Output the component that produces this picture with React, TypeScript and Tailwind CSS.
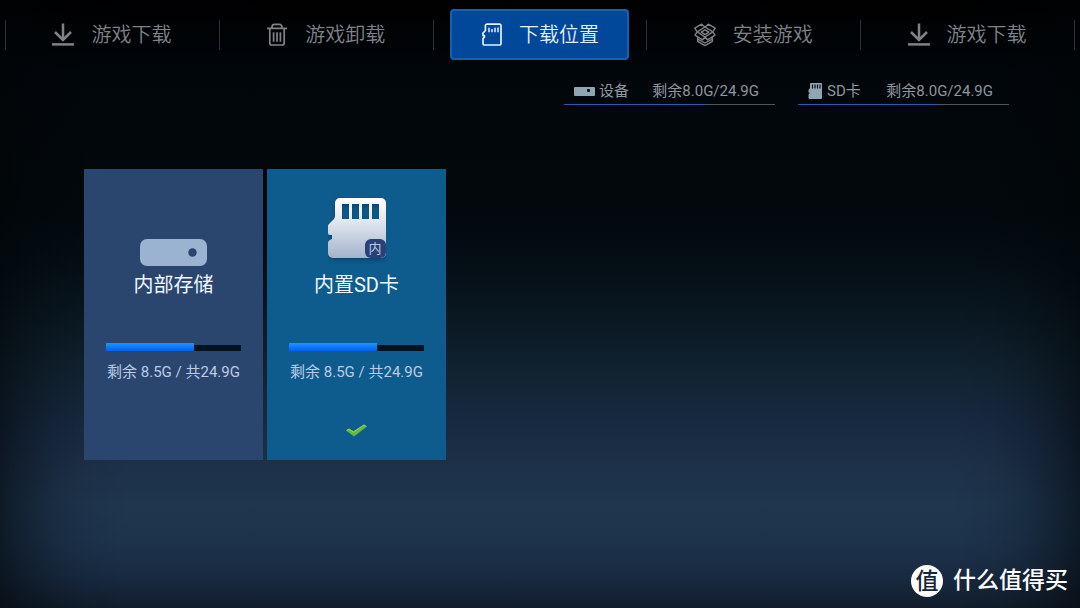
import { FC, ReactNode, useState } from 'react';

interface TabItem
{
    id: string;
    label: string;
    icon: ReactNode;
}

interface StorageItem
{
    id: string;
    name: string;
    usage: string;
    percent: number;
    icon: ReactNode;
}

const DownloadIcon: FC<{}> = () => (
    <svg className="w-6 h-6" viewBox="0 0 24 24" fill="none" stroke="currentColor" strokeWidth="2.5" aria-hidden="true">
        <path d="M12 .5v16.500M4 9l8 8 8-8" />
        <path d="M1 21.400h22" />
    </svg>
);

const TrashIcon: FC<{}> = () => (
    <svg className="w-6 h-6" viewBox="0 0 24 24" fill="none" stroke="currentColor" strokeWidth="1.7" aria-hidden="true">
        <path d="M2 5.400h20M7 5.200V4a2.600 2.600 0 0 1 2.600-2.600h4.800A2.600 2.600 0 0 1 17 4v1.200" />
        <path d="M4.800 5.600v14.400a2 2 0 0 0 2 2h10.400a2 2 0 0 0 2-2V5.600" />
        <path d="M8.600 9.200v9.600M12 9.200v9.600M15.400 9.200v9.600" />
    </svg>
);

const CardIcon: FC<{}> = () => (
    <svg className="w-6 h-6" viewBox="0 0 24 24" fill="none" stroke="currentColor" strokeWidth="1.7" strokeLinejoin="round" aria-hidden="true">
        <path d="M8 1.200h12.600a1.400 1.400 0 0 1 1.400 1.400v18a1.400 1.400 0 0 1-1.400 1.400H5.400a1.400 1.400 0 0 1-1.400-1.400v-5l1.400-1.400v-1.600H4V10l2.400-2.400V2.800A1.600 1.600 0 0 1 8 1.200z" />
        <path d="M10 4.800v4.400M13 6v3.200M16 4.800v4.400M19 4.400v4.800" strokeWidth="1.500" />
    </svg>
);

const BoxIcon: FC<{}> = () => (
    <svg className="w-6 h-6" viewBox="0 0 24 24" fill="none" stroke="currentColor" strokeWidth="1.400" strokeLinejoin="round" aria-hidden="true">
        <path d="M12 4 8.600 1.200 1.800 5.200l2.400 3.600L2 12.200l2.600 1.600v4.600L12 22.600l7.400-4.200v-4.600l2.600-1.600-2.200-3.400 2.400-3.600-6.800-4L12 4z" />
        <path d="M12 4 4.200 8.800M12 4l7.800 4.800M4.200 8.800 12 14l7.800-5.200" />
        <path d="M12 6.800 8.200 9.200 12 11.600l3.800-2.400L12 6.800z" />
        <path d="M4.600 13.800 9.600 16.800 12 14l2.400 2.800 5-3" />
        <path d="M4.600 16.200 12 20l7.400-3.800" />
    </svg>
);

const DeviceSmallIcon: FC<{}> = () => (
    <svg className="w-[21px] h-[9px]" viewBox="0 0 21 9" aria-hidden="true">
        <rect width="21" height="9" rx="1" fill="#8fa6b2" />
        <rect x="13" y="2" width="3" height="3" rx="1" fill="#05101a" />
    </svg>
);

const CardSmallIcon: FC<{}> = () => (
    <svg className="w-[15px] h-4" viewBox="0 0 15 16" aria-hidden="true">
        <path d="M3 0h10a1 1 0 0 1 1 1v14a1 1 0 0 1-1 1H1.500a1 1 0 0 1-1-1v-3.500l1-1V9.500h-1V7L2 5V1a1 1 0 0 1 1-1z" fill="#8fa6b2" />
        <path d="M4.500 1.500v4M7 1.500v4M9.500 1.500v4M12 1.500v4" stroke="#05101a" strokeWidth="1.200" />
    </svg>
);

const DeviceIcon: FC<{}> = () => (
    <svg className="w-[67px] h-[27px]" viewBox="0 0 67 27" aria-hidden="true">
        <rect width="67" height="27" rx="7" fill="#9bb2d1" />
        <circle cx="52.500" cy="13.500" r="4.200" fill="#2a466f" />
    </svg>
);

const InnerCardIcon: FC<{}> = () => (
    <div className="relative">
        <svg className="w-[58px] h-[69px]" viewBox="0 0 58 69" aria-hidden="true">
            <defs>
                <linearGradient id="cardBody" x1="0" y1="0" x2="0" y2="1">
                    <stop offset="0" stopColor="#ffffff" />
                    <stop offset="0.400" stopColor="#dfe6ee" />
                    <stop offset="1" stopColor="#a3b3cb" />
                </linearGradient>
                <filter id="cardShadow" x="-20%" y="-20%" width="140%" height="140%">
                    <feDropShadow dx="0" dy="2" stdDeviation="2" floodColor="#052b4d" floodOpacity="0.500" />
                </filter>
            </defs>
            <path filter="url(#cardShadow)" fill="url(#cardBody)" fillRule="evenodd" d="M12 1h41a5 5 0 0 1 5 5v50a5 5 0 0 1-5 5H5a5 5 0 0 1-5-5V46q0-2 2-3l2-1v-4H2q-2 0-2-2V29q0-1 1-2l5-5q1-1 1-3V6a5 5 0 0 1 5-5zM14 7v15h7V7zM24 7v15h7V7zM34 7v15h7V7zM44 7v15h7V7z" />
        </svg>
        <span className="absolute right-0 bottom-2 flex items-center justify-center w-[21px] h-[19px] rounded-md bg-[#2b4176] text-[13px] leading-none text-[#b9c8e6]">内</span>
    </div>
);

const CheckIcon: FC<{}> = () => (
    <svg className="w-[21px] h-[13px]" viewBox="0 0 21 13" aria-hidden="true">
        <path d="M0 6.400 3 4.400l4.500 2.800L18 .400l3 2L8 12.600z" fill="#62bb38" />
        <path d="M.600 6.400 3 5l4.500 3L18 1l2.200 1.300" fill="none" stroke="#a0d973" strokeWidth="0.800" />
    </svg>
);

const tabs: TabItem[] = [
    { id: 'download', label: '游戏下载', icon: <DownloadIcon /> },
    { id: 'uninstall', label: '游戏卸载', icon: <TrashIcon /> },
    { id: 'location', label: '下载位置', icon: <CardIcon /> },
    { id: 'install', label: '安装游戏', icon: <BoxIcon /> },
    { id: 'download-2', label: '游戏下载', icon: <DownloadIcon /> }
];

const statuses: StorageItem[] = [
    { id: 'device', name: '设备', usage: '剩余8.0G/24.9G', percent: 67, icon: <DeviceSmallIcon /> },
    { id: 'sd', name: 'SD卡', usage: '剩余8.0G/24.9G', percent: 67, icon: <CardSmallIcon /> }
];

const locations: StorageItem[] = [
    { id: 'internal', name: '内部存储', usage: '剩余 8.5G / 共24.9G', percent: 65, icon: <DeviceIcon /> },
    { id: 'inner-sd', name: '内置SD卡', usage: '剩余 8.5G / 共24.9G', percent: 65, icon: <InnerCardIcon /> }
];

const Separator: FC<{}> = () => <span className="w-px h-[30px] shrink-0 bg-[#2c3038]" />;

const TabBarView: FC<{}> = () =>
{
    const [ activeTab, setActiveTab ] = useState('location');

    return (
        <nav className="flex items-center px-[5px] pt-[9px]">
            <Separator />
            { tabs.map(tab => (
                <div key={ tab.id } className="flex flex-1 items-center">
                    <div className="flex flex-1 justify-center">
                        <button
                            type="button"
                            className={ `flex items-center justify-center gap-4 w-[179px] h-[51px] pr-[2px] rounded border-2 text-xl font-[350] cursor-pointer ${ activeTab === tab.id ? 'border-[#1660b0] bg-[#01489a] text-[#e4f0ff]' : 'border-transparent text-[#7f8289]' }` }
                            onClick={ () => setActiveTab(tab.id) }
                        >
                            { tab.icon }
                            <span>{ tab.label }</span>
                        </button>
                    </div>
                    <Separator />
                </div>
            )) }
        </nav>
    );
};

const StatusBarView: FC<{}> = () => (
    <div className="flex justify-end gap-[23px] pt-[18px] pr-[71px]">
        { statuses.map(item => (
            <div key={ item.id } className="w-[211px] text-[15px] leading-[26px] text-[#8d979f]">
                <div className="flex items-center justify-between pl-[10px] pr-4">
                    <span className="flex items-center gap-1">
                        { item.icon }
                        { item.name }
                    </span>
                    <span>{ item.usage }</span>
                </div>
                <div className="h-px bg-[#50545c]">
                    <div className="h-full bg-[#2459b4]" style={ { width: `${ item.percent }%` } } />
                </div>
            </div>
        )) }
    </div>
);

const LocationListView: FC<{}> = () =>
{
    const [ selectedId, setSelectedId ] = useState('inner-sd');

    return (
        <main className="flex gap-1 px-[84px] pt-16">
            { locations.map(item => (
                <button
                    key={ item.id }
                    type="button"
                    className={ `flex flex-col items-center w-[179px] pb-[23px] cursor-pointer ${ selectedId === item.id ? 'bg-[#0e5c8d]' : 'bg-[#2a466f]' }` }
                    onClick={ () => setSelectedId(item.id) }
                >
                    <span className="flex items-end h-[97px]">{ item.icon }</span>
                    <span className="mt-[5px] text-xl leading-7 text-[#f0f6ff]">{ item.name }</span>
                    <span className="flex items-end w-[135px] h-2 mt-11">
                        <span className="h-2 bg-linear-to-b from-[#1f93ff] to-[#0560f0]" style={ { width: `${ item.percent }%` } } />
                        <span className="flex-1 h-[6px] bg-[#03131f]" />
                    </span>
                    <span className="mt-[11px] text-[15px] leading-5 text-[#bccbe2]">{ item.usage }</span>
                    { (selectedId === item.id) && <span className="flex mt-[42px]"><CheckIcon /></span> }
                </button>
            )) }
        </main>
    );
};

const BrandView: FC<{}> = () => (
    <footer className="flex items-center justify-end gap-[10px] mt-auto pr-3 pb-[11px] text-white">
        <span className="flex items-center justify-center w-8 h-8 rounded-full bg-white text-[23px] leading-none font-medium text-[#16263a]">值</span>
        <span className="text-[23px] leading-8 font-medium">什么值得买</span>
    </footer>
);

export default function App()
{
    return (
        <div className="flex flex-col min-h-screen overflow-hidden font-['Roboto','Noto_Sans_CJK_SC',sans-serif] bg-[linear-gradient(to_bottom,#000_0%,#01060a_12%,#02080c_35%,#050f16_44%,#0a1923_53%,#122432_62%,#182a42_70%,#1d3149_77%,#1f364e_83%,#1d334c_89%,#182a40_95%,#111d2b_100%)]">
            <div className="flex flex-col flex-1 bg-[linear-gradient(to_right,rgba(0,4,6,0.55)_0%,rgba(0,4,6,0.38)_2%,rgba(0,4,6,0.18)_5%,rgba(0,4,6,0.06)_8%,transparent_12%,transparent_88%,rgba(0,4,6,0.06)_92%,rgba(0,4,6,0.18)_95%,rgba(0,4,6,0.38)_98%,rgba(0,4,6,0.55)_100%)]">
                <TabBarView />
                <StatusBarView />
                <LocationListView />
                <BrandView />
            </div>
        </div>
    );
}
